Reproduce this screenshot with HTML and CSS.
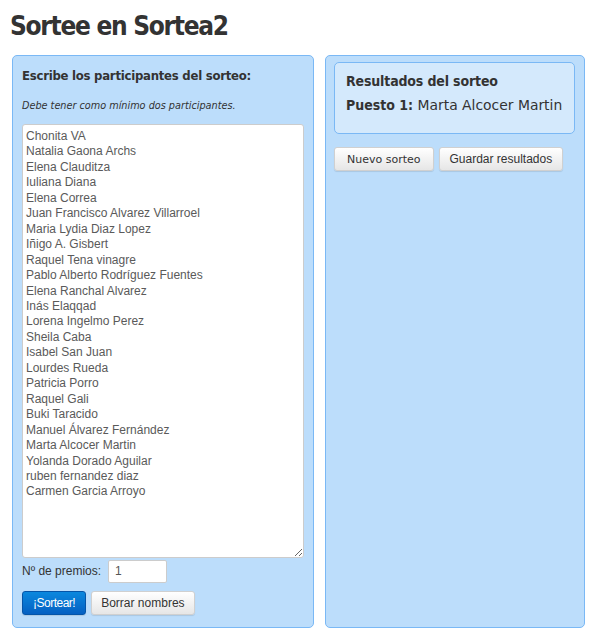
FILE: index.html
```html
<!DOCTYPE html>
<html lang="es">
<head>
  <meta charset="UTF-8">
  <title>Sortee en Sortea2</title>
  <link rel="stylesheet" href="styles.css">
</head>
<body>
  <h1>Sortee en Sortea2</h1>

  <div class="columns">
    <div class="panel left">
      <h3>Escribe los participantes del sorteo:</h3>
      <p class="hint">Debe tener como mínimo dos participantes.</p>
      <textarea id="nombres">Chonita VA
Natalia Gaona Archs
Elena Clauditza
Iuliana Diana
Elena Correa
Juan Francisco Alvarez Villarroel
Maria Lydia Diaz Lopez
Iñigo A. Gisbert
Raquel Tena vinagre
Pablo Alberto Rodríguez Fuentes
Elena Ranchal Alvarez
Inás Elaqqad
Lorena Ingelmo Perez
Sheila Caba
Isabel San Juan
Lourdes Rueda
Patricia Porro
Raquel Gali
Buki Taracido
Manuel Álvarez Fernández
Marta Alcocer Martin
Yolanda Dorado Aguilar
ruben fernandez diaz
Carmen Garcia Arroyo</textarea>
      <div class="premios">
        <label for="premios">Nº de premios:</label>
        <input type="text" id="premios" value="1">
      </div>
      <div class="actions">
        <button class="btn primary">¡Sortear!</button>
        <button class="btn">Borrar nombres</button>
      </div>
    </div>

    <div class="panel right">
      <div class="result">
        <h3>Resultados del sorteo</h3>
        <p class="puesto"><b>Puesto 1:</b> Marta Alcocer Martin</p>
      </div>
      <div class="actions">
        <button class="btn verdana">Nuevo sorteo</button>
        <button class="btn">Guardar resultados</button>
      </div>
    </div>
  </div>
</body>
</html>
```

FILE: styles.css
```css
body { margin: 0; padding: 0 15px 0 12px; background: #fff; font-family: "Liberation Sans", Arial, sans-serif; color: #333; }
h1 { font-family: "DejaVu Sans Condensed", "DejaVu Sans", sans-serif; font-weight: bold; font-size: 26px; color: #333; margin: 0; padding: 11px 0 0 0; height: 44px; letter-spacing: -1.3px; position: relative; left: -2px; }
.columns { display: flex; gap: 11px; }
.panel { background: #bcddfb; border: 1px solid #7ab8f5; border-radius: 5px; height: 573px; box-sizing: border-box; }
.left { width: 302px; padding: 12px 9px 0 9px; }
.right { width: 262px; padding: 6px 9px 0 8px; }
h3 { font-family: "DejaVu Sans Condensed", "DejaVu Sans", sans-serif; font-size: 13px; font-weight: bold; margin: 0; color: #333; letter-spacing: -0.25px; }
.hint { font-family: "DejaVu Sans", sans-serif; font-style: italic; font-size: 9.7px; margin: 17px 0 13px 0; color: #333; }
textarea { display: block; width: 282px; height: 434px; box-sizing: border-box; margin: 0; padding: 4px 3px; border: 1px solid #ccc; border-radius: 3px; font-family: "Liberation Sans", Arial, sans-serif; font-size: 12px; line-height: 15.45px; color: #5a5a5a; resize: vertical; background: #fff; }
.premios { display: flex; align-items: center; margin-top: 1px; height: 24px; font-size: 12px; }
.premios label { width: 86px; color: #333; }
.premios input { width: 59px; height: 23px; box-sizing: border-box; border: 1px solid #ccc; border-radius: 2px; padding: 0 6px; font-family: "Liberation Sans", Arial, sans-serif; font-size: 12px; color: #555; }
.actions { display: flex; gap: 5px; margin-top: 8px; }
.btn { height: 24px; padding: 0 10px; font-family: "Liberation Sans", Arial, sans-serif; font-size: 12px; color: #333; background: linear-gradient(#ffffff, #e6e6e6); border: 1px solid #d0d0d0; border-radius: 3px; box-shadow: 0 1px 1px rgba(0,0,0,0.1); cursor: pointer; }
.btn.primary { color: #fff; background: linear-gradient(#0b88de, #0560c2); border-color: #0555a8; padding: 0 10px; letter-spacing: -0.5px; }
.btn.verdana { font-family: "DejaVu Sans", sans-serif; font-size: 11px; padding: 0 12px; }
.left .actions .btn + .btn { padding: 0 9px; }
.result { background: #d4e9fc; border: 1px solid #7ab8f5; border-radius: 5px; height: 72px; box-sizing: border-box; padding: 10px 4px 10px 11px; }
.result h3 { font-size: 14px; font-weight: 600; letter-spacing: -0.15px; }
.puesto { font-family: "DejaVu Sans", sans-serif; font-size: 13.9px; margin: 8px 0 0 0; color: #333; white-space: nowrap; }
.puesto b { font-family: "DejaVu Sans Condensed", "DejaVu Sans", sans-serif; font-size: 14px; }
.right .actions { margin-top: 13px; }
```
